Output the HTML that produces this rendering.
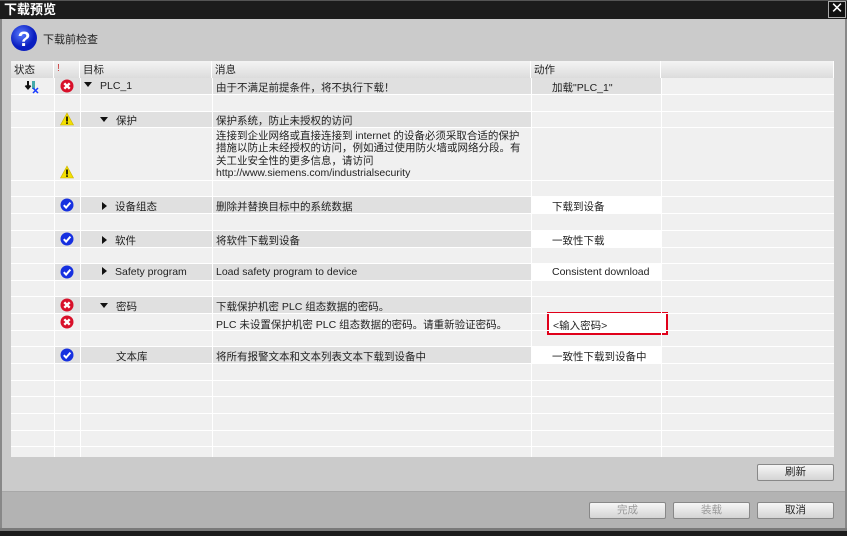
<!DOCTYPE html>
<html><head><meta charset="utf-8"><style>
*{margin:0;padding:0;box-sizing:border-box}
body{width:847px;height:536px;overflow:hidden;background:#cbcbcb;font-family:"Liberation Sans","Noto Sans CJK SC",sans-serif;font-size:10.5px;color:#222;position:relative}
.a{position:absolute}
.title{left:0;top:0;width:847px;height:19px;background:#1c1c1c;color:#fff;font-weight:bold;font-size:13px;line-height:17px;padding:0 0 0 4px;border-top:1px solid #555}
.close{left:828px;top:1px;width:18px;height:17px;border:1px solid #aaa;color:#fff;font-size:15px;line-height:14px;text-align:center;background:#111}
.lb{left:0;top:19px;width:2px;height:512px;background:#888}
.rb{left:845px;top:19px;width:2px;height:512px;background:#888}
.table{left:11px;top:61px;width:823px;height:396px;background:#f0f0f0}
.hd{top:61px;height:17px;background:linear-gradient(#f4f4f4,#dcdcdc);border-right:1px solid #fff;padding:1px 0 0 3px;font-size:10.5px}
.vl{top:78px;width:1px;height:379px;background:#fff}
.hl{left:11px;width:823px;height:1px;background:#fff}
.c{background:#e0e0e0;padding:2px 0 0 4px;white-space:nowrap}
.w{background:#fff;padding:2px 0 0 21px;white-space:nowrap}
.btn{height:17px;border:1px solid #888;border-radius:2px;background:linear-gradient(#f6f6f6,#d4d4d4);text-align:center;font-size:10.5px;line-height:15px}
.dis{color:#999}
.tri{display:inline-block;width:0;height:0}
.dn{border-left:4px solid transparent;border-right:4px solid transparent;border-top:5px solid #111;vertical-align:2px;margin-right:8px}
.rt{border-top:4px solid transparent;border-bottom:4px solid transparent;border-left:5px solid #111;vertical-align:0;margin-right:8px}
</style></head><body>
<div class="a title">下载预览</div>
<div class="a close">✕</div>
<div class="a lb"></div><div class="a rb"></div>
<svg class="a" style="left:10px;top:24px" width="28" height="28" viewBox="0 0 28 28"><defs><radialGradient id="g" cx="40%" cy="35%"><stop offset="0" stop-color="#5a7cff"/><stop offset="1" stop-color="#0a1ec0"/></radialGradient></defs><circle cx="14" cy="14" r="13" fill="url(#g)"/><text x="14" y="22" text-anchor="middle" font-family="Liberation Sans" font-weight="bold" font-size="21" fill="#fff">?</text></svg>
<div class="a" style="left:43px;top:31px;font-size:11px">下载前检查</div>

<div class="a table"></div>
<div class="a hd" style="left:11px;width:43px">状态</div>
<div class="a hd" style="left:54px;width:26px;color:#c44">!</div>
<div class="a hd" style="left:80px;width:132px">目标</div>
<div class="a hd" style="left:212px;width:319px">消息</div>
<div class="a hd" style="left:531px;width:130px">动作</div>
<div class="a hd" style="left:661px;width:173px"></div>

<div class="a c" style="left:54px;top:78px;width:26px;height:16px"></div>
<div class="a c" style="left:80px;top:78px;width:132px;height:16px"><span class="tri dn"></span>PLC_1</div>
<div class="a c" style="left:212px;top:78px;width:319px;height:16px">由于不满足前提条件，将不执行下载！</div>
<div class="a c" style="left:531px;top:78px;width:130px;height:16px;padding-left:21px">加载"PLC_1"</div>
<div class="a c" style="left:54px;top:111px;width:26px;height:16px"></div>
<div class="a c" style="left:80px;top:111px;width:132px;height:16px;padding-left:20px"><span class="tri dn"></span>保护</div>
<div class="a c" style="left:212px;top:111px;width:319px;height:16px">保护系统，防止未授权的访问</div>
<div class="a" style="left:216px;top:130px;width:310px;line-height:12.3px">连接到企业网络或直接连接到 internet 的设备必须采取合适的保护措施以防止未经授权的访问，例如通过使用防火墙或网络分段。有关工业安全性的更多信息，请访问<br>http://www.siemens.com/industrialsecurity</div>
<div class="a c" style="left:54px;top:197px;width:26px;height:16px"></div>
<div class="a c" style="left:80px;top:197px;width:132px;height:16px;padding-left:22px"><span class="tri rt"></span>设备组态</div>
<div class="a c" style="left:212px;top:197px;width:319px;height:16px">删除并替换目标中的系统数据</div>
<div class="a w" style="left:531px;top:197px;width:130px;height:16px">下载到设备</div>
<div class="a c" style="left:54px;top:231px;width:26px;height:16px"></div>
<div class="a c" style="left:80px;top:231px;width:132px;height:16px;padding-left:22px"><span class="tri rt"></span>软件</div>
<div class="a c" style="left:212px;top:231px;width:319px;height:16px">将软件下载到设备</div>
<div class="a w" style="left:531px;top:231px;width:130px;height:16px">一致性下载</div>
<div class="a c" style="left:54px;top:264px;width:26px;height:16px"></div>
<div class="a c" style="left:80px;top:264px;width:132px;height:16px;padding-left:22px"><span class="tri rt"></span>Safety program</div>
<div class="a c" style="left:212px;top:264px;width:319px;height:16px">Load safety program to device</div>
<div class="a w" style="left:531px;top:264px;width:130px;height:16px">Consistent download</div>
<div class="a c" style="left:54px;top:297px;width:26px;height:16px"></div>
<div class="a c" style="left:80px;top:297px;width:132px;height:16px;padding-left:20px"><span class="tri dn"></span>密码</div>
<div class="a c" style="left:212px;top:297px;width:319px;height:16px">下载保护机密 PLC 组态数据的密码。</div>
<div class="a" style="left:216px;top:317px">PLC 未设置保护机密 PLC 组态数据的密码。请重新验证密码。</div>
<div class="a w" style="left:547px;top:312px;width:121px;height:23px;border:2px solid #e0001a;padding:4px 0 0 4px">&lt;输入密码&gt;</div>
<div class="a c" style="left:54px;top:347px;width:26px;height:16px"></div>
<div class="a c" style="left:80px;top:347px;width:132px;height:16px;padding-left:36px">文本库</div>
<div class="a c" style="left:212px;top:347px;width:319px;height:16px">将所有报警文本和文本列表文本下载到设备中</div>
<div class="a w" style="left:531px;top:347px;width:130px;height:16px">一致性下载到设备中</div>

<div class="a vl" style="left:54px"></div><div class="a vl" style="left:80px"></div><div class="a vl" style="left:212px"></div><div class="a vl" style="left:531px"></div><div class="a vl" style="left:661px"></div>
<div class="a hl" style="top:94px"></div><div class="a hl" style="top:111px"></div><div class="a hl" style="top:127px"></div><div class="a hl" style="top:180px"></div><div class="a hl" style="top:196px"></div><div class="a hl" style="top:213px"></div><div class="a hl" style="top:230px"></div><div class="a hl" style="top:247px"></div><div class="a hl" style="top:263px"></div><div class="a hl" style="top:280px"></div><div class="a hl" style="top:296px"></div><div class="a hl" style="top:313px"></div><div class="a hl" style="top:330px"></div><div class="a hl" style="top:346px"></div><div class="a hl" style="top:363px"></div><div class="a hl" style="top:380px"></div><div class="a hl" style="top:396px"></div><div class="a hl" style="top:413px"></div><div class="a hl" style="top:430px"></div><div class="a hl" style="top:446px"></div>

<svg class="a" style="left:24px;top:80px" width="16" height="14" viewBox="0 0 16 14"><path d="M4 1v7M1.5 5.5L4 8.5 6.5 5.5" stroke="#111" stroke-width="2" fill="none"/><rect x="8" y="1" width="3" height="8" fill="#4aa"/><path d="M9 8l5 5M14 8l-5 5" stroke="#1a3cff" stroke-width="1.5"/></svg>
<svg width="0" height="0" style="position:absolute"><defs>
<g id="x"><circle cx="7" cy="7" r="6.5" fill="#d8102a"/><path d="M4.3 4.3l5.4 5.4M9.7 4.3l-5.4 5.4" stroke="#fff" stroke-width="2.4"/></g>
<g id="ok"><circle cx="7" cy="7" r="6.5" fill="#1630e0"/><path d="M3.8 7.2l2.3 2.4 4.3-5" stroke="#fff" stroke-width="2" fill="none"/></g>
<g id="w"><path d="M7 1L13.5 13H0.5z" fill="#f3e000" stroke="#c8b000" stroke-width=".6"/><rect x="6.2" y="4.5" width="1.6" height="5" fill="#000"/><rect x="6.2" y="10.3" width="1.6" height="1.6" fill="#000"/></g>
</defs></svg>
<svg class="a" style="left:60px;top:79px" width="14" height="14"><use href="#x"/></svg>
<svg class="a" style="left:60px;top:112px" width="14" height="14"><use href="#w"/></svg>
<svg class="a" style="left:60px;top:165px" width="14" height="14"><use href="#w"/></svg>
<svg class="a" style="left:60px;top:198px" width="14" height="14"><use href="#ok"/></svg>
<svg class="a" style="left:60px;top:232px" width="14" height="14"><use href="#ok"/></svg>
<svg class="a" style="left:60px;top:265px" width="14" height="14"><use href="#ok"/></svg>
<svg class="a" style="left:60px;top:298px" width="14" height="14"><use href="#x"/></svg>
<svg class="a" style="left:60px;top:315px" width="14" height="14"><use href="#x"/></svg>
<svg class="a" style="left:60px;top:348px" width="14" height="14"><use href="#ok"/></svg>

<div class="a btn" style="left:757px;top:464px;width:77px">刷新</div>
<div class="a" style="left:2px;top:491px;width:843px;height:39px;background:#b3b3b3;border-top:1px solid #a8a8a8"></div>
<div class="a btn dis" style="left:589px;top:502px;width:77px">完成</div>
<div class="a btn dis" style="left:673px;top:502px;width:77px">装载</div>
<div class="a btn" style="left:757px;top:502px;width:77px">取消</div>
<div class="a" style="left:0;top:528px;width:847px;height:3px;background:#7a7a7a"></div>
<div class="a" style="left:0;top:531px;width:847px;height:5px;background:#1c1c1c"></div>
</body></html>
